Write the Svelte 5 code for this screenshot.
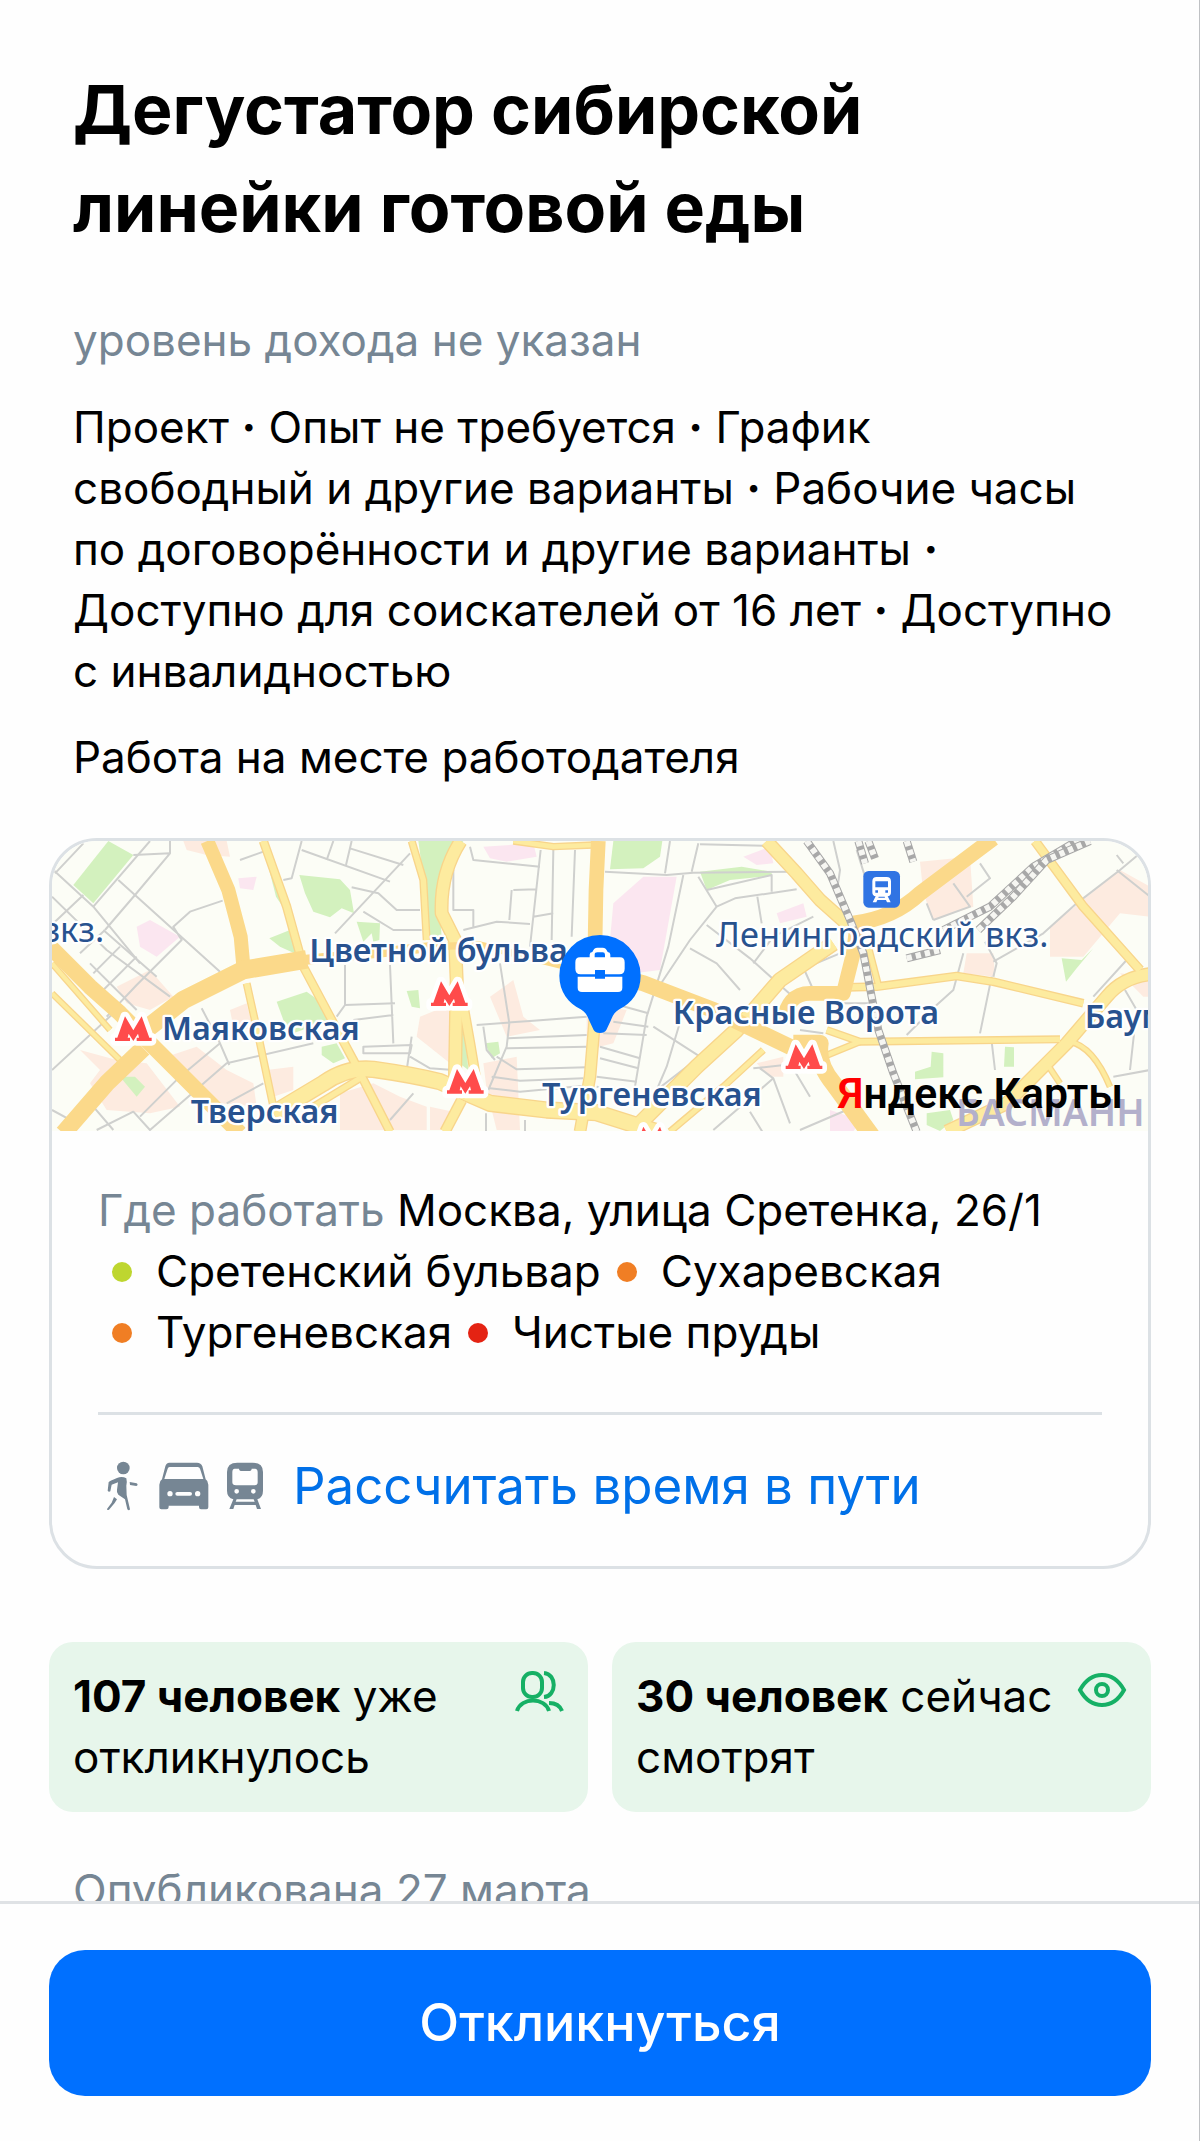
<script>
  const conditions = [
    'Проект',
    'Опыт не требуется',
    'График свободный и другие варианты',
    'Рабочие часы по договорённости и другие варианты',
    'Доступно для соискателей от 16 лет',
    'Доступно с инвалидностью'
  ];

  const stations = [
    { name: 'Сретенский бульвар', color: '#bed62f' },
    { name: 'Сухаревская', color: '#f07e24' },
    { name: 'Тургеневская', color: '#f07e24' },
    { name: 'Чистые пруды', color: '#e42313' }
  ];

  // map drawing, in thirds of a pixel
  const peach = [
    '430,33 560,33 570,80 500,75 440,60',
    '230,470 330,420 400,500 330,540 260,520',
    '120,660 230,690 320,700 420,830 330,850 200,840 150,760 180,720',
    '380,680 470,650 560,720 640,760 650,830 540,820 440,740',
    '570,540 620,520 640,600 580,590',
    '680,720 760,710 760,780 700,800',
    '900,790 1000,760 1080,800 1160,830 1160,900 900,900',
    '1140,560 1240,520 1230,700 1130,620',
    '1350,500 1420,450 1450,560 1500,600 1400,620',
    '1330,700 1430,680 1440,900 1370,900 1340,780',
    '1640,520 1760,540 1720,640 1640,660',
    '1170,830 1260,850 1230,900 1170,900',
    '2150,700 2230,680 2230,740 2190,740',
    '2640,95 2790,80 2800,230 2680,270 2650,190',
    '2780,370 2860,370 2865,440 2770,430',
    '3030,290 3240,120 3330,170 3330,260 3240,250 3130,380 3030,380',
    '3240,430 3330,440 3330,500 3310,500'
  ];
  const pink = [
    '290,290 330,270 420,320 350,380 300,350',
    '595,145 650,140 640,180 600,175',
    '1330,50 1480,40 1490,80 1400,95 1350,85',
    '1720,220 1810,140 1910,140 1860,420 1700,440',
    '2110,80 2190,50 2200,100 2150,105',
    '2210,250 2290,220 2300,260 2220,280',
    '2370,840 2460,870 2440,905 2370,905'
  ];
  const parks = [
    '205,33 280,75 160,220 100,165',
    '675,70 700,110 735,240 708,200',
    '778,135 900,148 930,180 942,250 905,235 870,262 820,245 795,190',
    '950,275 1020,280 1018,330 1000,335 995,310 970,335',
    '688,325 750,300 768,372 720,350',
    '710,515 800,485 835,510 870,570 760,610 730,570',
    '845,650 890,640 915,685 880,700 845,675',
    '240,740 285,740 315,770 290,800',
    '1100,483 1135,480 1140,535 1115,530',
    '1135,33 1270,33 1220,110 1200,210 1205,330 1165,330 1155,180',
    '1720,33 1867,33 1860,80 1810,115 1710,118',
    '1980,125 2105,110 2195,125 2195,137 2070,150 2000,180',
    '1335,640 1375,635 1380,670 1355,685',
    '1258,590 1275,600 1285,720 1258,700',
    '2675,665 2710,670 2710,742 2625,748 2625,725 2672,710',
    '2895,650 2922,652 2922,710 2892,710',
    '2660,850 2730,840 2740,870 2700,903 2660,885',
    '3065,385 3125,390 3160,355 3110,415 3078,455'
  ];
  const streets = [
    'M36 200 L200 360 L390 500 M40 120 L160 230 L300 400 M130 40 L45 130 M280 75 L390 70 L285 195 L195 300',
    'M330 33 L160 230 M390 33 L390 70 M235 150 L540 425 M548 212 L450 245 L400 290 L425 330 L290 465 L200 560',
    'M45 275 L130 195 M120 370 L195 300 M150 400 L290 540 M190 300 L350 440 M160 430 L240 350 M190 480 L290 380',
    'M36 720 L220 550 M36 840 L110 880 M170 900 L280 845 L330 900 L560 700 L820 640 M300 860 L420 740 L540 640',
    'M485 535 L540 640 L568 705 M160 830 L220 900 M560 820 L670 760 M600 90 L670 65 M785 60 L1050 155 M1110 70 L885 310',
    'M785 33 L755 145 L730 150 M880 33 L860 90 M935 33 L918 105 M930 55 L1090 105 M935 172 L1015 190 L1070 240 L1140 240',
    'M970 245 L1060 300 L1145 300 M915 405 L915 525 L1065 520 M1050 405 L1060 640 M890 560 L915 525 M940 570 L1060 555',
    'M970 650 L1115 645 L1110 670 L970 670 Z M1115 620 L1100 720 M1110 680 L1170 715 L1240 720 M1120 790 L1050 870',
    'M1290 50 L1300 90 L1500 110 M1240 240 L1300 240 M1240 120 L1240 240 L1300 240 L1300 290 M1270 300 L1370 275 L1470 282',
    'M1420 180 L1490 178 M1415 180 L1408 270 M1502 60 L1470 350 M1540 60 L1535 330 M1605 60 L1595 320 M1480 260 L1540 250',
    'M1380 400 L1408 580 L1400 650 L1345 780 M1310 585 L1480 572 L1640 560 M1400 625 L1640 615 M1398 655 L1640 650 M1370 680 L1430 718 L1640 712',
    'M1355 740 L1440 752 L1630 745 M1350 775 L1440 785 L1625 768 M1330 590 L1340 660 L1365 690 M1700 515 L1825 550 M1720 575 L1825 590 M1690 610 L1820 615',
    'M1680 650 L1800 685 M1680 685 L1795 715 M1670 740 L1790 755 M1670 770 L1785 785 M1695 125 L1880 135 L1960 128 L2260 125',
    'M1890 33 L1875 130 M1975 40 L1955 125 M1980 43 L2190 48 M1930 135 L1885 350 L1820 560 L1785 770 M1975 140 L2030 230',
    'M2000 180 L2195 135 L2195 185 M2270 178 L2085 205 L2030 230 L1950 330 L1850 480 M2152 200 L2165 280 M1950 355 L2030 400 L2100 480',
    'M2000 285 L2130 385 L2270 510 M2140 400 L2200 320 L2320 260 M2280 420 L2400 370 M2280 390 L2320 480 M1840 590 L1980 680 L1850 780',
    'M1925 560 L1880 710 L1850 780 M2140 715 L2280 700 M2160 715 L2200 745 L2250 880 M2200 745 L2020 900 M2130 845 L2170 910 M2250 700 L2310 800',
    'M1338 850 L1338 905 M1455 870 L1455 905 M2380 33 L2400 120 L2390 190 M2450 60 L2475 140 M2680 270 L2790 230 L2740 160',
    'M2820 100 L2850 145 L2780 200 M2680 270 L2660 220 M2860 395 L3010 310 L3110 220 L3240 120 L3300 70 M3230 75 L3250 100 M3230 120 L3330 200',
    'M2770 370 L2740 480 L2690 525 L2600 615 M2855 440 L2820 610 M2835 335 L2870 400 L2860 440 M2855 635 L2865 720 M3260 390 L3160 500',
    'M3255 480 L3290 540 L3270 720 M3220 740 L3330 720 M2280 900 L2420 840 M2400 520 L2500 520 M2280 600 L2350 610'
  ];
  const roads = [
    { d: 'M36 400 L210 600', w: 16 },
    { d: 'M36 490 L240 690', w: 16 },
    { d: 'M670 33 L740 230 L790 410 L870 560 L940 690 L1050 905', w: 24 },
    { d: 'M620 460 L660 640 L700 830', w: 20 },
    { d: 'M1115 33 L1150 150 L1160 330', w: 20 },
    { d: 'M1262 33 Q1200 130 1205 250 L1245 330 L1250 450 L1245 740', w: 38 },
    { d: 'M1265 500 L1290 640 L1310 760', w: 28 },
    { d: 'M700 850 L850 760 Q920 710 1000 718 Q1120 735 1200 755 L1350 820 L1520 840 L1670 848 L1850 905', w: 48 },
    { d: 'M820 830 L960 745', w: 20 },
    { d: 'M1265 810 L1215 905', w: 30 },
    { d: 'M1420 33 L1540 50 L1660 45', w: 18 },
    { d: 'M1665 560 L1650 740 L1620 905', w: 34 },
    { d: 'M1800 880 L1970 710 L2090 600 L2220 450 L2380 340', w: 44 },
    { d: 'M2180 33 L2270 130 L2340 210 L2430 290', w: 38 },
    { d: 'M1890 905 L2050 770 L2170 660', w: 18 },
    { d: 'M2420 472 L2510 470 L2750 438 L2860 455 L3130 520', w: 22 },
    { d: 'M2485 350 L2515 465', w: 18 },
    { d: 'M2360 600 L2460 635 L3060 628', w: 20 },
    { d: 'M2350 680 L2460 635', w: 18 },
    { d: 'M2985 33 L3130 230 L3300 420', w: 26 },
    { d: 'M3335 432 Q3250 440 3200 500 L3080 640 L2900 820 L2720 905', w: 38 },
    { d: 'M3090 635 Q3160 650 3210 770', w: 16 },
    { d: 'M3020 700 L3060 760', w: 16 }
  ];
  const highways = [
    { d: 'M502 33 L565 180 L602 320 L612 430', w: 42 },
    { d: 'M290 620 L430 510 L610 420 L800 388', w: 56 },
    { d: 'M790 390 L1000 370 L1180 350', w: 30 },
    { d: 'M1180 350 L1320 345 L1560 405 L1700 430', w: 22 },
    { d: 'M1690 428 L1810 460 L2020 540 L2270 660', w: 48 },
    { d: 'M1675 33 L1668 180 L1665 345', w: 44 },
    { d: 'M2230 580 Q2240 490 2310 490 L2410 490 L2440 370 L2450 290', w: 44 },
    { d: 'M2260 640 L2340 640 Q2330 700 2380 760 L2500 925', w: 52 },
    { d: 'M2440 280 Q2560 265 2640 190 L2860 25', w: 46 },
    { d: 'M30 350 L150 470 L240 550 L430 740 L600 910', w: 48 },
    { d: 'M310 655 L200 760 L70 910', w: 52 }
  ];
  const rails = [
    'M2300 33 L2370 130 L2430 270 L2470 370 L2495 500 L2515 600 L2560 730 L2630 905',
    'M2455 33 L2475 100',
    'M2485 33 L2505 85',
    'M2600 33 L2620 95',
    'M2600 385 L2700 360',
    'M2710 300 L2850 230 L2980 110 L3110 33',
    'M2815 300 L2920 200 L3020 90 L3150 33'
  ];
  const metro = [
    [280, 597],
    [1228, 492],
    [1276, 755],
    [2292, 681],
    [1835, 928]
  ];
  const labels = [
    { text: 'вкз.', x: 2, y: 337, light: true },
    { text: 'Цветной бульва', x: 808, y: 395 },
    { text: 'Маяковская', x: 366, y: 630 },
    { text: 'Тверская', x: 452, y: 880 },
    { text: 'Тургеневская', x: 1506, y: 828 },
    { text: 'Ленинградский вкз.', x: 2028, y: 350, light: true },
    { text: 'Красные Ворота', x: 1898, y: 583 },
    { text: 'Баум', x: 3134, y: 595 }
  ];
</script>

<div class="page">
  <main class="vacancy">
    <div class="summary">
      <h1>Дегустатор сибирской линейки готовой еды</h1>
      <p class="muted income">уровень дохода не указан</p>
      <p class="conditions">
        {#each conditions as condition, i}{#if i > 0}{' '}<b>·</b>{' '}{/if}{condition}{/each}
      </p>
      <p>Работа на месте работодателя</p>
    </div>

    <section class="card">
      <svg class="map" viewBox="36 33 3288 870" role="img" aria-label="Карта">
        <rect x="36" y="33" width="3288" height="870" fill="#fcfdf6" />
        {#each peach as points}
          <polygon {points} fill="#fdebe0" />
        {/each}
        {#each pink as points}
          <polygon {points} fill="#fbe6f0" />
        {/each}
        {#each parks as points}
          <polygon {points} fill="#d3f1be" />
        {/each}
        {#each streets as d}
          <path {d} class="street" />
        {/each}
        {#each roads as road}
          <path d={road.d} class="line" stroke="#f8d58b" stroke-width={road.w + 4} />
        {/each}
        {#each roads as road}
          <path d={road.d} class="line" stroke="#fdeb9f" stroke-width={road.w - 4} />
        {/each}
        {#each highways as road}
          <path d={road.d} class="line" stroke="#fbd98a" stroke-width={road.w} />
        {/each}
        {#each rails as d}
          <path {d} class="line" stroke="#a8a8a8" stroke-width="24" />
          <path {d} class="line" stroke="#f6f6f2" stroke-width="18" stroke-dasharray="16 12" />
        {/each}

        <text x="2748" y="888" class="district">БАСМАНН</text>
        {#each labels as label}
          <text x={label.x} y={label.y} class="label" class:light={label.light}>{label.text}</text>
        {/each}

        {#each metro as [x, y]}
          <path
            transform="translate({x} {y})"
            class="metro"
            d="M-55 36 V26 H-48 L-25 -38 L0 4 L25 -38 L48 26 H55 V36 H10 V26 H17 L14 14 L0 36 L-14 14 L-17 26 H-10 V36 Z"
          />
        {/each}

        <g transform="translate(2470 123)">
          <rect width="110" height="110" rx="16" fill="#3074e3" />
          <path
            fill="#fff"
            fill-rule="evenodd"
            d="M40 18 H70 Q83 18 83 31 V64 Q83 75 73 76 L82 94 H71 L68 87 H42 L39 94 H28 L37 76 Q27 75 27 64 V31 Q27 18 40 18 Z M36 31 V49 H74 V31 Z M36 58 V65 H44 V58 Z M66 58 V65 H74 V58 Z M46 77 L45 80 H65 L64 77 Z"
          />
        </g>

        <path
          fill="#0070ff"
          d="M1680 315 A122 122 0 0 1 1802 437 C1802 486 1775 518 1738 538 C1722 548 1718 558 1712 572 L1699 600 Q1694 609 1680 609 Q1666 609 1661 600 L1648 572 C1642 558 1638 548 1622 538 C1585 518 1558 486 1558 437 A122 122 0 0 1 1680 315 Z"
        />
        <g fill="#fff">
          <path
            fill-rule="evenodd"
            d="M1649 382 V374 Q1649 367 1657 366 Q1662 353 1672 353 H1688 Q1698 353 1703 366 Q1711 367 1711 374 V382 H1740 Q1754 382 1754 397 V416 Q1754 433 1738 433 H1695 V420 H1665 V433 H1622 Q1606 433 1606 416 V397 Q1606 382 1620 382 Z M1664 382 H1695 V374 Q1695 367 1688 367 H1672 Q1664 367 1664 374 Z"
          />
          <path d="M1613 440 H1665 V446 H1695 V440 H1747 V473 Q1747 486 1734 486 H1626 Q1613 486 1613 473 Z" />
        </g>

        <text x="2393" y="833" class="brand"><tspan fill="#f00">Я</tspan>ндекс Карты</text>
      </svg>

      <div class="address">
        <p><span class="muted">Где работать</span> Москва, улица Сретенка, 26/1</p>
        <ul>
          {#each stations as station}
            <li><i class="dot" style="background: {station.color}"></i>{station.name}</li>
          {/each}
        </ul>
      </div>

      <div class="route">
        <svg width="120" height="54" viewBox="0 0 360 162" fill="#768694" aria-hidden="true">
          <circle cx="49" cy="27" r="19" />
          <path
            d="M30 57 Q45 50 58 58 Q61 70 58 80 L59 108 L69 151 Q66 157 61 151 L54 121 L34 107 Q28 100 30 92 L33 70 L14 77 L10 97 Q5 100 2 95 L5 69 Q7 66 30 57 Z M68 69 L89 73 Q95 78 88 81 L69 78 Z M21 114 L30 121 L23 132 L6 152 Q0 155 0 150 L14 131 Z"
          />
          <path
            fill-rule="evenodd"
            d="M187 11 H270 Q282 11 286 22 L296 61 Q304 66 304 77 V145 Q304 151 298 151 H282 Q276 151 276 144 V140 H185 V144 Q185 151 178 151 H163 Q157 151 157 145 V77 Q157 66 165 61 L175 22 Q178 11 187 11 Z M188 24 Q183 24 182 29 L172 60 H289 L279 29 Q277 24 272 24 Z M189 96 A8 8 0 1 0 189 112 A8 8 0 1 0 189 96 Z M272 96 A8 8 0 1 0 272 112 A8 8 0 1 0 272 96 Z M211 99 Q205 99 205 104 Q205 110 211 110 H249 Q255 110 255 104 Q255 99 249 99 Z"
          />
        </svg>
        <svg class="train" width="36" height="54" viewBox="0 0 108 162" fill="#768694" aria-hidden="true">
          <path
            fill-rule="evenodd"
            d="M31 11 H77 Q108 11 108 39 V95 Q108 116 91 121 L102 150 H90 L86 138 H23 L19 150 H7 L19 121 Q0 116 0 95 V39 Q0 11 31 11 Z M23 29 Q16 29 16 40 V70 Q16 79 27 79 H83 Q92 79 92 70 V40 Q92 29 84 29 H74 Q74 36 65 36 H45 Q36 36 36 29 Z M29 90 A7 7 0 1 0 29 104 A7 7 0 1 0 29 90 Z M79 90 A7 7 0 1 0 79 104 A7 7 0 1 0 79 90 Z M29 121 L26 128 H83 L80 121 Z"
          />
        </svg>
        <a href="#route">Рассчитать время в пути</a>
      </div>
    </section>

    <div class="stats">
      <div class="stat">
        <p><b>107 человек</b> уже откликнулось</p>
        <svg width="50" height="50" viewBox="0 0 50 50" class="stat-icon" aria-hidden="true">
          <rect x="9" y="7" width="19" height="24" rx="9" />
          <path d="M30 7 C43 8 43 30 30 31 M3 45 C7 31 31 31 35 45 M35 37 Q45 37 48 45" />
        </svg>
      </div>
      <div class="stat">
        <p><b>30 человек</b> сейчас смотрят</p>
        <svg width="50" height="50" viewBox="0 0 50 50" class="stat-icon" aria-hidden="true">
          <path d="M3 24 C14 4 36 4 47 24 C36 44 14 44 3 24 Z" />
          <circle cx="25" cy="24" r="6" />
        </svg>
      </div>
    </div>

    <p class="muted published">Опубликована 27 марта</p>
  </main>

  <footer>
    <button type="button">Откликнуться</button>
  </footer>
</div>

<style>
  :global(body) {
    background: #fff;
  }

  .page {
    display: flex;
    flex-direction: column;
    height: 100vh;
    box-sizing: border-box;
    border-right: 1px solid #bfc1c4;
    color: #000;
    background: #fefefe;
    font: 44px/61px Inter, Arial, sans-serif;
  }

  .vacancy {
    flex: 1;
    min-height: 0;
    overflow: hidden;
    padding: 60px 48px 0 49px;
  }

  .summary {
    padding: 0 36px 0 24px;
  }

  h1 {
    max-width: 900px;
    margin: 0 0 54px;
    font-size: 68px;
    font-weight: 700;
    line-height: 98px;
  }

  p {
    margin: 0;
  }

  .muted {
    color: #768694;
  }

  .income {
    margin-bottom: 26px;
  }

  .conditions {
    margin-bottom: 25px;
  }

  .card {
    margin-top: 50px;
    overflow: hidden;
    border: 3px solid #dce1e5;
    border-radius: 48px;
  }

  .map {
    display: block;
    width: 100%;
  }

  .street,
  .line {
    fill: none;
    stroke-linejoin: round;
  }

  .street {
    stroke: #cfd0ce;
    stroke-width: 6;
  }

  .label {
    fill: #28528f;
    stroke: #fff;
    stroke-width: 14;
    stroke-linejoin: round;
    paint-order: stroke;
    font: 600 97px "Noto Sans", sans-serif;
  }

  .light {
    font-size: 103px;
    font-weight: 400;
  }

  .district {
    fill: #b3b0cb;
    font: 600 112px "Noto Sans", sans-serif;
  }

  .brand {
    fill: #000;
    font: 600 128px Roboto, sans-serif;
  }

  .metro {
    fill: #ff4b4b;
    stroke: #fff;
    stroke-width: 28;
    stroke-linejoin: round;
    paint-order: stroke;
  }

  .address {
    margin: 0 46px;
    padding: 49px 0;
    border-bottom: 3px solid #dce1e5;
  }

  ul {
    display: flex;
    flex-wrap: wrap;
    margin: 0;
    padding: 0;
    list-style: none;
  }

  li {
    display: flex;
    align-items: center;
    padding-right: 2px;
  }

  .dot {
    width: 20px;
    height: 20px;
    margin: 0 24px 0 14px;
    border-radius: 50%;
  }

  .route {
    display: flex;
    align-items: center;
    padding: 39px 46px 48px 55px;
  }

  .train {
    margin: 0 30px 0 0;
  }

  a {
    color: #0070e8;
    font-size: 51px;
    line-height: 64px;
    text-decoration: none;
  }

  .stats {
    display: grid;
    grid-template-columns: 1fr 1fr;
    gap: 24px;
    margin: 73px 0 48px;
  }

  .stat {
    display: flex;
    justify-content: space-between;
    padding: 24px;
    border-radius: 24px;
    background: #e7f6eb;
  }

  .stat-icon {
    flex: none;
    fill: none;
    stroke: #16b065;
    stroke-width: 4;
  }

  .published {
    padding: 0 24px;
  }

  footer {
    padding: 46px 48px 45px 49px;
    border-top: 3px solid #dfe2e5;
    background: #fefefe;
  }

  button {
    display: block;
    width: 100%;
    padding: 41px;
    border: 0;
    border-radius: 36px;
    color: #fff;
    background: #0070ff;
    font: 500 52px/64px Inter, Arial, sans-serif;
    cursor: pointer;
  }
</style>
